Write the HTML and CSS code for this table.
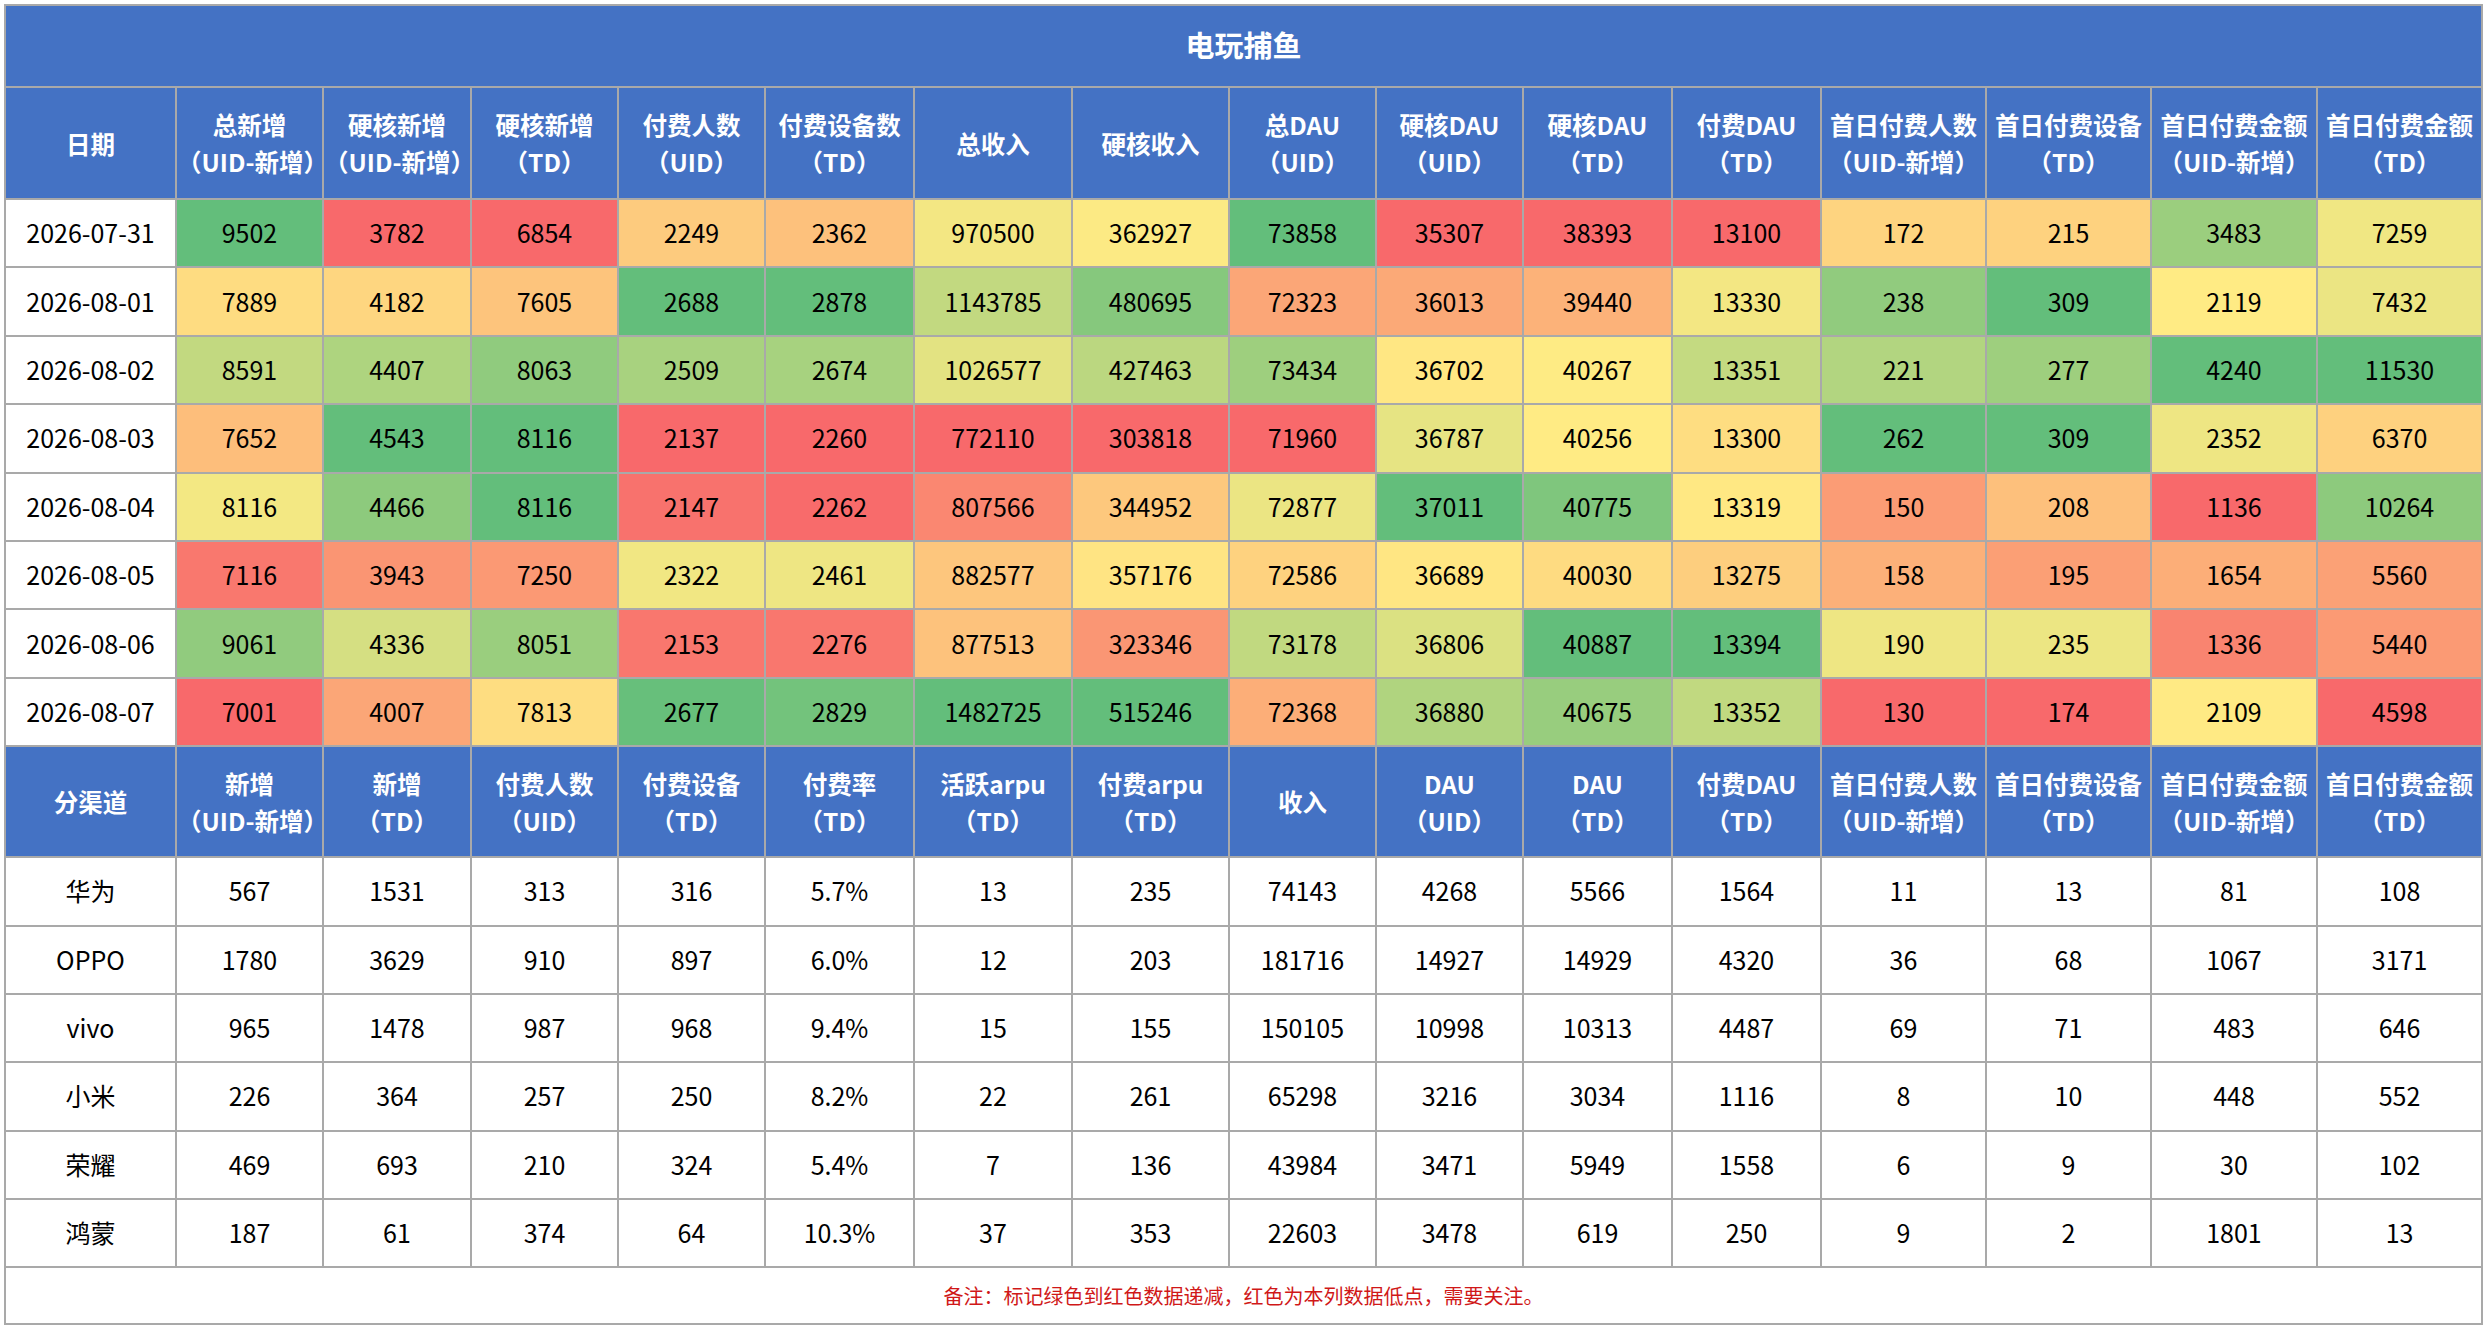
FILE: index.html
```html
<!DOCTYPE html>
<html lang="zh-CN">
<head>
<meta charset="utf-8">
<title>电玩捕鱼</title>
<link rel="stylesheet" href="styles.css">
</head>
<body>
<div class="page">
<table class="report">
<colgroup>
<col><col><col><col><col><col><col><col><col><col><col><col><col><col><col><col>
</colgroup>
<tbody>
<tr class="title"><th colspan="16">电玩捕鱼</th></tr>
<tr class="head">
<th>日期</th>
<th>总新增<br>（UID-新增）</th>
<th>硬核新增<br>（UID-新增）</th>
<th>硬核新增<br>（TD）</th>
<th>付费人数<br>（UID）</th>
<th>付费设备数<br>（TD）</th>
<th>总收入</th>
<th>硬核收入</th>
<th>总DAU<br>（UID）</th>
<th>硬核DAU<br>（UID）</th>
<th>硬核DAU<br>（TD）</th>
<th>付费DAU<br>（TD）</th>
<th>首日付费人数<br>（UID-新增）</th>
<th>首日付费设备<br>（TD）</th>
<th>首日付费金额<br>（UID-新增）</th>
<th>首日付费金额<br>（TD）</th>
</tr>
<tr class="daily"><td>2026-07-31</td><td>9502</td><td>3782</td><td>6854</td><td>2249</td><td>2362</td><td>970500</td><td>362927</td><td>73858</td><td>35307</td><td>38393</td><td>13100</td><td>172</td><td>215</td><td>3483</td><td>7259</td></tr>
<tr class="daily"><td>2026-08-01</td><td>7889</td><td>4182</td><td>7605</td><td>2688</td><td>2878</td><td>1143785</td><td>480695</td><td>72323</td><td>36013</td><td>39440</td><td>13330</td><td>238</td><td>309</td><td>2119</td><td>7432</td></tr>
<tr class="daily"><td>2026-08-02</td><td>8591</td><td>4407</td><td>8063</td><td>2509</td><td>2674</td><td>1026577</td><td>427463</td><td>73434</td><td>36702</td><td>40267</td><td>13351</td><td>221</td><td>277</td><td>4240</td><td>11530</td></tr>
<tr class="daily"><td>2026-08-03</td><td>7652</td><td>4543</td><td>8116</td><td>2137</td><td>2260</td><td>772110</td><td>303818</td><td>71960</td><td>36787</td><td>40256</td><td>13300</td><td>262</td><td>309</td><td>2352</td><td>6370</td></tr>
<tr class="daily"><td>2026-08-04</td><td>8116</td><td>4466</td><td>8116</td><td>2147</td><td>2262</td><td>807566</td><td>344952</td><td>72877</td><td>37011</td><td>40775</td><td>13319</td><td>150</td><td>208</td><td>1136</td><td>10264</td></tr>
<tr class="daily"><td>2026-08-05</td><td>7116</td><td>3943</td><td>7250</td><td>2322</td><td>2461</td><td>882577</td><td>357176</td><td>72586</td><td>36689</td><td>40030</td><td>13275</td><td>158</td><td>195</td><td>1654</td><td>5560</td></tr>
<tr class="daily"><td>2026-08-06</td><td>9061</td><td>4336</td><td>8051</td><td>2153</td><td>2276</td><td>877513</td><td>323346</td><td>73178</td><td>36806</td><td>40887</td><td>13394</td><td>190</td><td>235</td><td>1336</td><td>5440</td></tr>
<tr class="daily"><td>2026-08-07</td><td>7001</td><td>4007</td><td>7813</td><td>2677</td><td>2829</td><td>1482725</td><td>515246</td><td>72368</td><td>36880</td><td>40675</td><td>13352</td><td>130</td><td>174</td><td>2109</td><td>4598</td></tr>
<tr class="head head2">
<th>分渠道</th>
<th>新增<br>（UID-新增）</th>
<th>新增<br>（TD）</th>
<th>付费人数<br>（UID）</th>
<th>付费设备<br>（TD）</th>
<th>付费率<br>（TD）</th>
<th>活跃arpu<br>（TD）</th>
<th>付费arpu<br>（TD）</th>
<th>收入</th>
<th>DAU<br>（UID）</th>
<th>DAU<br>（TD）</th>
<th>付费DAU<br>（TD）</th>
<th>首日付费人数<br>（UID-新增）</th>
<th>首日付费设备<br>（TD）</th>
<th>首日付费金额<br>（UID-新增）</th>
<th>首日付费金额<br>（TD）</th>
</tr>
<tr class="channel"><td>华为</td><td>567</td><td>1531</td><td>313</td><td>316</td><td>5.7%</td><td>13</td><td>235</td><td>74143</td><td>4268</td><td>5566</td><td>1564</td><td>11</td><td>13</td><td>81</td><td>108</td></tr>
<tr class="channel"><td>OPPO</td><td>1780</td><td>3629</td><td>910</td><td>897</td><td>6.0%</td><td>12</td><td>203</td><td>181716</td><td>14927</td><td>14929</td><td>4320</td><td>36</td><td>68</td><td>1067</td><td>3171</td></tr>
<tr class="channel"><td>vivo</td><td>965</td><td>1478</td><td>987</td><td>968</td><td>9.4%</td><td>15</td><td>155</td><td>150105</td><td>10998</td><td>10313</td><td>4487</td><td>69</td><td>71</td><td>483</td><td>646</td></tr>
<tr class="channel"><td>小米</td><td>226</td><td>364</td><td>257</td><td>250</td><td>8.2%</td><td>22</td><td>261</td><td>65298</td><td>3216</td><td>3034</td><td>1116</td><td>8</td><td>10</td><td>448</td><td>552</td></tr>
<tr class="channel"><td>荣耀</td><td>469</td><td>693</td><td>210</td><td>324</td><td>5.4%</td><td>7</td><td>136</td><td>43984</td><td>3471</td><td>5949</td><td>1558</td><td>6</td><td>9</td><td>30</td><td>102</td></tr>
<tr class="channel"><td>鸿蒙</td><td>187</td><td>61</td><td>374</td><td>64</td><td>10.3%</td><td>37</td><td>353</td><td>22603</td><td>3478</td><td>619</td><td>250</td><td>9</td><td>2</td><td>1801</td><td>13</td></tr>
<tr class="note"><td colspan="16">备注：标记绿色到红色数据递减，红色为本列数据低点，需要关注。</td></tr>
</tbody>
</table>
</div>
<script src="script.js"></script>
</body>
</html>
```

FILE: styles.css
```css
html, body {
  margin: 0;
  padding: 0;
  background: #ffffff;
}

body {
  font-family: "Noto Sans CJK SC", "Noto Sans", sans-serif;
  color: #000000;
}

.page {
  padding: 4px 4px 0 4px;
}

.report {
  border-collapse: collapse;
  table-layout: fixed;
  width: 2477px;
}

.report col:nth-child(1) { width: 171px; }
.report col:nth-child(2) { width: 147px; }
.report col:nth-child(3) { width: 148px; }
.report col:nth-child(4) { width: 147px; }
.report col:nth-child(5) { width: 147px; }
.report col:nth-child(6) { width: 149px; }
.report col:nth-child(7) { width: 158px; }
.report col:nth-child(8) { width: 157px; }
.report col:nth-child(9) { width: 147px; }
.report col:nth-child(10) { width: 147px; }
.report col:nth-child(11) { width: 149px; }
.report col:nth-child(12) { width: 149px; }
.report col:nth-child(13) { width: 165px; }
.report col:nth-child(14) { width: 165px; }
.report col:nth-child(15) { width: 166px; }
.report col:nth-child(16) { width: 165px; }

.report th,
.report td {
  border: 2px solid #a9a9a9;
  padding: 0;
  text-align: center;
  vertical-align: middle;
  white-space: nowrap;
}

.report th {
  background: #4472c4;
  color: #ffffff;
  font-weight: 700;
}

.title {
  height: 82px;
}

.title th {
  font-size: 29px;
  line-height: 40px;
  padding-bottom: 4px;
}

.head {
  height: 112px;
}

.head th {
  font-size: 24.5px;
  line-height: 37px;
}

.head2 {
  height: 111px;
}

.daily,
.channel {
  height: 68.4px;
}

.daily td,
.channel td {
  font-size: 25px;
  line-height: 34px;
  padding-bottom: 2px;
  background: #ffffff;
  color: #000000;
}

.note {
  height: 57px;
}

.note td {
  font-size: 20px;
  line-height: 30px;
  color: #d01818;
  background: #ffffff;
}
```

FILE: script.js
```js
(function () {
  var RED = [248, 105, 107];
  var YELLOW = [255, 235, 132];
  var GREEN = [99, 190, 123];

  function mix(a, b, t) {
    return [0, 1, 2].map(function (i) {
      return Math.round(a[i] + (b[i] - a[i]) * t);
    });
  }

  var rows = Array.prototype.slice.call(document.querySelectorAll('.report tr.daily'));
  if (!rows.length) return;
  var cols = rows[0].cells.length;

  for (var c = 1; c < cols; c++) {
    var cells = rows.map(function (r) { return r.cells[c]; });
    var vals = cells.map(function (td) { return parseFloat(td.textContent); });
    var s = vals.slice().sort(function (a, b) { return a - b; });
    var min = s[0], max = s[s.length - 1];
    var h = (s.length - 1) * 0.5, lo = Math.floor(h);
    var mid = s[lo] + (h - lo) * ((s[lo + 1] !== undefined ? s[lo + 1] : s[lo]) - s[lo]);

    cells.forEach(function (td, i) {
      var v = vals[i], col;
      if (v <= mid) {
        col = mix(RED, YELLOW, mid === min ? 1 : (v - min) / (mid - min));
      } else {
        col = mix(YELLOW, GREEN, max === mid ? 1 : (v - mid) / (max - mid));
      }
      td.style.backgroundColor = 'rgb(' + col.join(',') + ')';
    });
  }
})();
```
